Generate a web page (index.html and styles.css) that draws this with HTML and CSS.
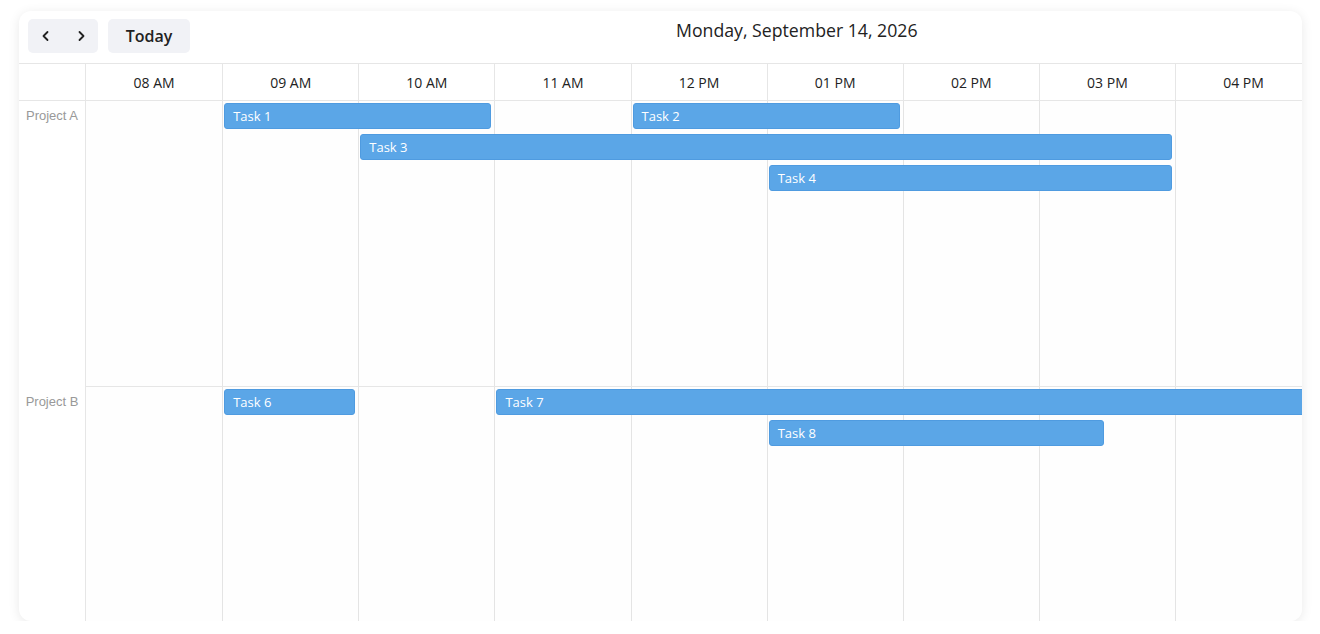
FILE: index.html
```html
<!DOCTYPE html>
<html lang="en">
<head>
<meta charset="UTF-8" />
<meta name="viewport" content="width=device-width, initial-scale=1" />
<title>Timeline</title>
<link rel="stylesheet" href="styles.css">
</head>
<body>
  <div class="scheduler">
    <div class="toolbar">
      <div class="nav-group">
        <button class="nav-btn" aria-label="Previous">
          <svg width="14" height="14" viewBox="0 0 14 14"><path d="M8.5 3 L4.5 7 L8.5 11" fill="none" stroke="#222" stroke-width="1.8" stroke-linecap="round" stroke-linejoin="round"/></svg>
        </button>
        <button class="nav-btn" aria-label="Next">
          <svg width="14" height="14" viewBox="0 0 14 14"><path d="M5.5 3 L9.5 7 L5.5 11" fill="none" stroke="#222" stroke-width="1.8" stroke-linecap="round" stroke-linejoin="round"/></svg>
        </button>
      </div>
      <button class="today-btn">Today</button>
      <div class="title">Monday, September 14, 2026</div>
    </div>

    <div class="board">
      <div class="head-row">
        <div class="corner"></div>
        <div class="hour">08 AM</div>
        <div class="hour">09 AM</div>
        <div class="hour">10 AM</div>
        <div class="hour">11 AM</div>
        <div class="hour">12 PM</div>
        <div class="hour">01 PM</div>
        <div class="hour">02 PM</div>
        <div class="hour">03 PM</div>
        <div class="hour">04 PM</div>
      </div>

      <div class="project">
        <div class="project-label">Project A</div>
        <div class="lanes">
          <div class="cell"></div><div class="cell"></div><div class="cell"></div>
          <div class="cell"></div><div class="cell"></div><div class="cell"></div>
          <div class="cell"></div><div class="cell"></div><div class="cell"></div>
          <div class="tasks">
            <div class="task" style="grid-column: 3 / 7; grid-row: 1;">Task 1</div>
            <div class="task" style="grid-column: 9 / 13; grid-row: 1;">Task 2</div>
            <div class="task" style="grid-column: 5 / 17; grid-row: 2;">Task 3</div>
            <div class="task" style="grid-column: 11 / 17; grid-row: 3;">Task 4</div>
          </div>
        </div>
      </div>

      <div class="project">
        <div class="project-label">Project B</div>
        <div class="lanes">
          <div class="cell"></div><div class="cell"></div><div class="cell"></div>
          <div class="cell"></div><div class="cell"></div><div class="cell"></div>
          <div class="cell"></div><div class="cell"></div><div class="cell"></div>
          <div class="tasks">
            <div class="task" style="grid-column: 3 / 5; grid-row: 1;">Task 6</div>
            <div class="task" style="grid-column: 7 / 21; grid-row: 1;">Task 7</div>
            <div class="task" style="grid-column: 11 / 16; grid-row: 2;">Task 8</div>
          </div>
        </div>
      </div>
    </div>
  </div>
</body>
</html>
```

FILE: styles.css
```css
body {
  margin: 0;
  background: #fff;
  font-family: 'Open Sans', 'Noto Sans', sans-serif;
  color: #222;
}
.scheduler {
  margin: 11px 18px 0 19px;
  height: 610px;
  background: #fff;
  border-radius: 12px;
  box-shadow: 0 2px 12px rgba(0,0,0,0.09);
  overflow: hidden;
  display: flex;
  flex-direction: column;
}
.toolbar {
  display: flex;
  align-items: flex-start;
  gap: 10px;
  padding: 8px 9px 10px;
  border-bottom: 1px solid #e6e6e6;
  flex: none;
}
.nav-group {
  display: flex;
  background: #f1f2f6;
  border-radius: 5px;
  height: 34px;
  width: 70px;
}
.nav-btn {
  flex: 1;
  border: none;
  background: none;
  padding: 0;
  display: flex;
  align-items: center;
  justify-content: center;
  cursor: pointer;
}
.today-btn {
  width: 82px;
  height: 34px;
  border: none;
  border-radius: 5px;
  background: #f1f2f6;
  font-family: 'Open Sans', sans-serif;
  font-weight: 600;
  font-size: 16px;
  color: #222;
  padding: 0;
  cursor: pointer;
}
.title {
  font-size: 17.7px;
  line-height: 22px;
  padding-left: 476px;
  color: #222;
}
.board {
  flex: 1;
  overflow: hidden;
  min-height: 0;
}
.head-row {
  display: flex;
  height: 36px;
  border-bottom: 1px solid #e6e6e6;
}
.corner {
  flex: none;
  width: 67px;
  box-sizing: border-box;
  border-right: 1px solid #e6e6e6;
}
.hour {
  flex: none;
  width: 136.14px;
  box-sizing: border-box;
  border-left: 1px solid #e6e6e6;
  font-size: 14px;
  display: flex;
  align-items: center;
  justify-content: center;
}
.hour:nth-child(2) {
  border-left: none;
}
.project {
  display: flex;
  height: 286px;
}
.project-label {
  flex: none;
  width: 67px;
  box-sizing: border-box;
  border-right: 1px solid #e6e6e6;
  font-family: 'Liberation Sans', Arial, sans-serif;
  font-size: 13px;
  line-height: 15px;
  color: #999;
  text-align: center;
  padding-top: 7px;
}
.lanes {
  position: relative;
  flex: 1;
  display: flex;
  border-bottom: 1px solid #e6e6e6;
  background: #fefefe;
}
.cell {
  flex: none;
  width: 136.14px;
  box-sizing: border-box;
  border-left: 1px solid #e4e4e4;
}
.cell:first-child {
  border-left: none;
}
.tasks {
  position: absolute;
  inset: 0;
  display: grid;
  grid-template-columns: repeat(24, 68.07px);
  grid-auto-rows: 26px;
  row-gap: 5px;
  align-content: start;
  padding-top: 2px;
}
.task {
  margin: 0 3px 0 2px;
  background: #5ba6e7;
  border: 1px solid #4f9be0;
  border-radius: 3px;
  color: #fff;
  font-size: 13px;
  line-height: 24px;
  padding-left: 8px;
  white-space: nowrap;
  overflow: hidden;
}
```
